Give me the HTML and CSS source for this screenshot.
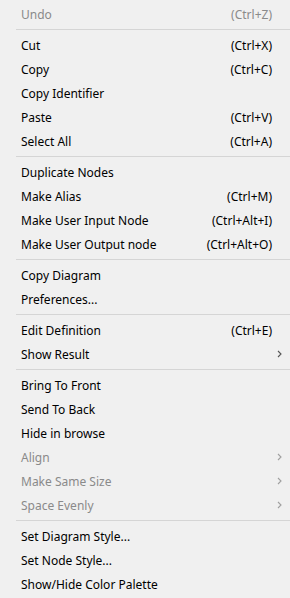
FILE: index.html
```html
<!DOCTYPE html>
<html lang="en">
<head>
    <meta charset="UTF-8">
    <meta name="viewport" content="width=device-width, initial-scale=1.0">
    <title>Diagram Context Menu</title>
    <link rel="stylesheet" href="styles.css">
</head>
<body>
    <ul class="menu">
        <li class="item disabled"><span class="label">Undo</span><span class="key">(Ctrl+Z)</span></li>
        <li class="sep"></li>
        <li class="item"><span class="label">Cut</span><span class="key">(Ctrl+X)</span></li>
        <li class="item"><span class="label">Copy</span><span class="key">(Ctrl+C)</span></li>
        <li class="item"><span class="label">Copy Identifier</span></li>
        <li class="item"><span class="label">Paste</span><span class="key">(Ctrl+V)</span></li>
        <li class="item"><span class="label">Select All</span><span class="key">(Ctrl+A)</span></li>
        <li class="sep"></li>
        <li class="item"><span class="label">Duplicate Nodes</span></li>
        <li class="item"><span class="label">Make Alias</span><span class="key">(Ctrl+M)</span></li>
        <li class="item"><span class="label">Make User Input Node</span><span class="key">(Ctrl+Alt+I)</span></li>
        <li class="item"><span class="label">Make User Output node</span><span class="key">(Ctrl+Alt+O)</span></li>
        <li class="sep"></li>
        <li class="item"><span class="label">Copy Diagram</span></li>
        <li class="item"><span class="label">Preferences...</span></li>
        <li class="sep"></li>
        <li class="item"><span class="label">Edit Definition</span><span class="key">(Ctrl+E)</span></li>
        <li class="item"><span class="label">Show Result</span><svg class="arrow" width="5" height="8" viewBox="0 0 5 8"><path d="M1 1l3 3-3 3" fill="none" stroke="currentColor" stroke-width="1.1"/></svg></li>
        <li class="sep"></li>
        <li class="item"><span class="label">Bring To Front</span></li>
        <li class="item"><span class="label">Send To Back</span></li>
        <li class="item"><span class="label">Hide in browse</span></li>
        <li class="item disabled"><span class="label">Align</span><svg class="arrow" width="5" height="8" viewBox="0 0 5 8"><path d="M1 1l3 3-3 3" fill="none" stroke="currentColor" stroke-width="1.1"/></svg></li>
        <li class="item disabled"><span class="label">Make Same Size</span><svg class="arrow" width="5" height="8" viewBox="0 0 5 8"><path d="M1 1l3 3-3 3" fill="none" stroke="currentColor" stroke-width="1.1"/></svg></li>
        <li class="item disabled"><span class="label">Space Evenly</span><svg class="arrow" width="5" height="8" viewBox="0 0 5 8"><path d="M1 1l3 3-3 3" fill="none" stroke="currentColor" stroke-width="1.1"/></svg></li>
        <li class="sep"></li>
        <li class="item"><span class="label">Set Diagram Style...</span></li>
        <li class="item"><span class="label">Set Node Style...</span></li>
        <li class="item"><span class="label">Show/Hide Color Palette</span></li>
    </ul>
</body>
</html>
```

FILE: styles.css
```css
html, body {
    margin: 0;
    padding: 0;
    background-color: #f0f0f0;
}
body {
    font-family: "Noto Sans", "Open Sans", sans-serif;
    font-size: 12px;
    color: #000;
}
.menu {
    list-style: none;
    margin: 0;
    padding: 2px 0 0 0;
    width: 290px;
}
.item {
    display: flex;
    align-items: center;
    justify-content: space-between;
    height: 24px;
    padding: 0 18px 0 21px;
}
.label {
    white-space: nowrap;
}
.key {
    white-space: nowrap;
}
.arrow {
    color: #555;
    margin-right: -10px;
}
.disabled {
    color: #8a8a8a;
}
.disabled .arrow {
    color: #a0a0a0;
}
.sep {
    height: 1px;
    margin: 3px 0 3px 16px;
    background-color: #d5d5d5;
}
```
